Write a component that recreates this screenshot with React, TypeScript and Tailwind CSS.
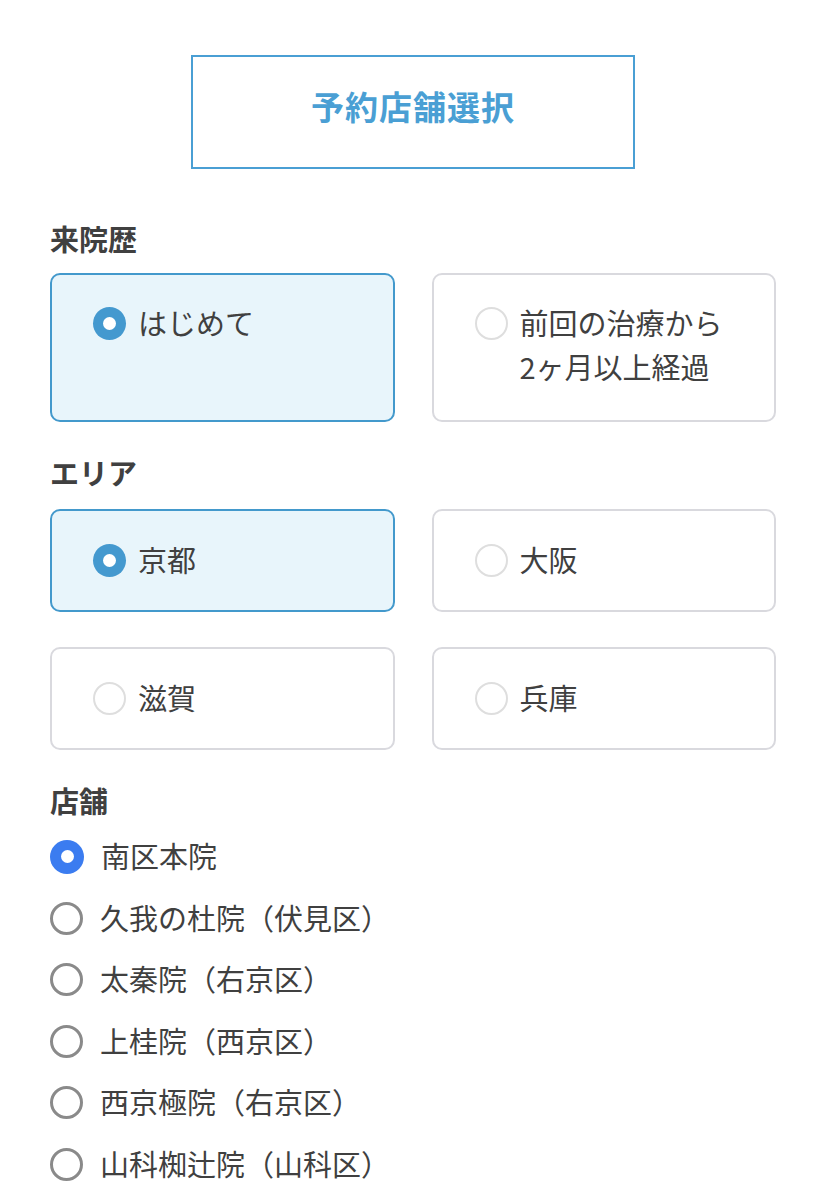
import { useState } from "react";

const font = {
  fontFamily: '"Noto Sans CJK JP", "Noto Sans", sans-serif',
};

type CardOption = { id: string; label: string[] };

const historyOptions: CardOption[] = [
  { id: "first", label: ["はじめて"] },
  { id: "return", label: ["前回の治療から", "2ヶ月以上経過"] },
];

const areaOptions: CardOption[] = [
  { id: "kyoto", label: ["京都"] },
  { id: "osaka", label: ["大阪"] },
  { id: "shiga", label: ["滋賀"] },
  { id: "hyogo", label: ["兵庫"] },
];

const shops = [
  "南区本院",
  "久我の杜院（伏見区）",
  "太秦院（右京区）",
  "上桂院（西京区）",
  "西京極院（右京区）",
  "山科椥辻院（山科区）",
];

const SectionLabel = ({ children }: { children: React.ReactNode }) => (
  <h2 className="text-[29px] font-bold leading-[40px] text-[#404040]">
    {children}
  </h2>
);

const OptionCard = ({
  option,
  active,
  tall,
  onSelect,
}: {
  option: CardOption;
  active: boolean;
  tall?: boolean;
  onSelect: () => void;
}) => (
  <button
    className={`flex gap-3 rounded-[10px] border-2 pl-[41px] text-left ${
      tall ? "h-[149px] items-start pt-[25px]" : "h-[103px] items-center pb-[3px]"
    } ${
      active
        ? "border-[#4399cc] bg-[#e8f5fb]"
        : "border-[#d9d9de] bg-white"
    }`}
    onClick={onSelect}
  >
    <span className="flex h-[44px] shrink-0 items-center pt-[3px]">
      {active ? (
        <span className="flex h-[33px] w-[33px] items-center justify-center rounded-full bg-[#4499cf]">
          <span className="h-[13px] w-[13px] rounded-full bg-white" />
        </span>
      ) : (
        <span className="h-[33px] w-[33px] rounded-full border-2 border-[#dedede] bg-white" />
      )}
    </span>
    <span className="text-[29px] leading-[44px] text-[#404040]">
      {option.label.map((line) => (
        <span key={line} className="block">
          {line}
        </span>
      ))}
    </span>
  </button>
);

export default function App() {
  const [history, setHistory] = useState("first");
  const [area, setArea] = useState("kyoto");
  const [shop, setShop] = useState(0);

  return (
    <div className="min-h-[1200px] bg-white px-[50px] pt-[55px]" style={font}>
      <div className="mx-auto flex h-[114px] w-[444px] items-center justify-center border-2 border-[#4a9fd4] pb-[10px]">
        <h1 className="text-[33px] font-bold tracking-[1px] text-[#4a9fd4]">
          予約店舗選択
        </h1>
      </div>

      <div className="mt-[49px]">
        <SectionLabel>来院歴</SectionLabel>
      </div>
      <div className="mt-[15px] grid grid-cols-2 gap-[37px]">
        {historyOptions.map((o) => (
          <OptionCard
            key={o.id}
            option={o}
            tall
            active={history === o.id}
            onSelect={() => setHistory(o.id)}
          />
        ))}
      </div>

      <div className="mt-[30px]">
        <SectionLabel>エリア</SectionLabel>
      </div>
      <div className="mt-[17px] grid grid-cols-2 gap-x-[37px] gap-y-[35px]">
        {areaOptions.map((o) => (
          <OptionCard
            key={o.id}
            option={o}
            active={area === o.id}
            onSelect={() => setArea(o.id)}
          />
        ))}
      </div>

      <div className="mt-[30px]">
        <SectionLabel>店舗</SectionLabel>
      </div>
      <ul className="mt-[6px]">
        {shops.map((name, i) => (
          <li key={name} className="flex h-[61.5px] items-center">
            <button
              className="flex items-center gap-[17px]"
              onClick={() => setShop(i)}
            >
              {shop === i ? (
                <span className="flex h-[34px] w-[34px] items-center justify-center rounded-full bg-[#3b7cf0]">
                  <span className="h-[13px] w-[13px] rounded-full bg-white" />
                </span>
              ) : (
                <span className="h-[33px] w-[33px] rounded-full border-[3px] border-[#8a8a8a]" />
              )}
              <span className="pb-[3px] text-[29px] leading-[40px] text-[#404040]">
                {name}
              </span>
            </button>
          </li>
        ))}
      </ul>
    </div>
  );
}
